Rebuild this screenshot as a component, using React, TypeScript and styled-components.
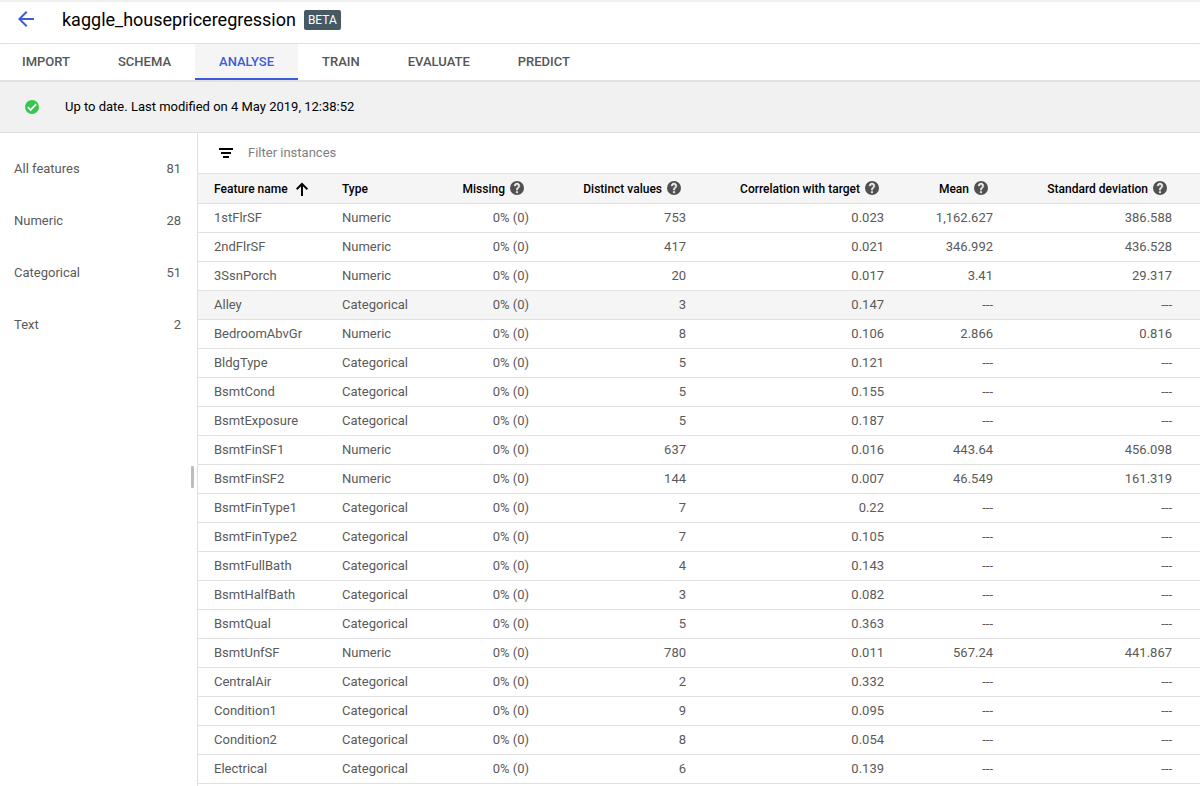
import React from 'react';
import styled, { createGlobalStyle } from 'styled-components';
import { MdArrowBack } from 'react-icons/md';

const GlobalStyle = createGlobalStyle`
  *, *::before, *::after { box-sizing: border-box; }
  body {
    margin: 0;
    background: #fff;
    color: #000;
    font-family: Roboto, "Liberation Sans", sans-serif;
    font-size: 13px;
    line-height: 20px;
  }
  button, input { font: inherit; color: inherit; }
`;

const Page = styled.div`
  display: flex;
  flex-direction: column;
  min-height: 100vh;
`;

const Header = styled.header`
  display: flex;
  align-items: center;
  height: 44px;
  padding: 0 14px 4px;
  border-bottom: 1px solid #e0e0e0;
  box-shadow: inset 0 2px 1px #f0f0f0;
`;

const BackButton = styled.button`
  display: flex;
  padding: 0 0 2px;
  border: 0;
  background: none;
  color: #3b5bdb;
  cursor: pointer;
`;

const Title = styled.h1`
  margin: 0 8px 0 24px;
  font-size: 18px;
  line-height: 24px;
  font-weight: 400;
`;

const Badge = styled.span`
  padding: 0 4px;
  border-radius: 2px;
  background: #455a64;
  color: #fff;
  font-size: 12px;
  line-height: 20px;
`;

const Tabs = styled.nav`
  display: flex;
  height: 38px;
  border-bottom: 2px solid #e0e0e0;
`;

const Tab = styled.a<{ $active?: boolean }>`
  padding: 8px 24px 0;
  border-bottom: 2px solid ${p => (p.$active ? '#3b5bdb' : 'transparent')};
  background: ${p => (p.$active ? '#f5f5f5' : 'transparent')};
  color: ${p => (p.$active ? '#3b5bdb' : '#555')};
  font-weight: 500;
  text-decoration: none;
  &:first-child { padding-left: 22px; }
`;

const StatusBar = styled.div`
  display: flex;
  align-items: center;
  gap: 26px;
  height: 51px;
  padding: 0 25px;
  border-bottom: 1px solid #e0e0e0;
  background: #f1f1f1;
`;

const Body = styled.div`
  display: flex;
  flex: 1;
`;

const Sidebar = styled.aside`
  position: relative;
  flex: 0 0 198px;
  padding-top: 10px;
  border-right: 1px solid #e0e0e0;
`;

const FeatureGroup = styled.button`
  display: flex;
  align-items: center;
  justify-content: space-between;
  width: 100%;
  height: 52px;
  padding: 0 16px 0 14px;
  border: 0;
  background: none;
  color: #5a5a5a;
  cursor: pointer;
`;

const ResizeHandle = styled.div`
  position: absolute;
  top: 333px;
  right: 3px;
  width: 3px;
  height: 22px;
  border-radius: 1px;
  background: #bdbdbd;
`;

const Main = styled.main`
  flex: 1;
  min-width: 0;
`;

const FilterBar = styled.label`
  display: flex;
  align-items: center;
  gap: 15px;
  height: 40px;
  padding: 0 21px;
`;

const FilterInput = styled.input`
  flex: 1;
  padding: 0;
  border: 0;
  outline: 0;
  background: none;
  &::placeholder { color: #808080; opacity: 1; }
`;

const Table = styled.table`
  width: 100%;
  min-width: 1000px;
  table-layout: fixed;
  border-collapse: separate;
  border-spacing: 0;
`;

const Col = styled.col<{ $width?: number }>`
  width: ${p => (p.$width ? `${p.$width}px` : 'auto')};
`;

const HeadCell = styled.th<{ $numeric?: boolean }>`
  height: 31px;
  padding: 0 ${p => (p.$numeric ? 21 : 16)}px 0 ${p => (p.$numeric ? 0 : 16)}px;
  border-top: 1px solid #e0e0e0;
  border-bottom: 1px solid #e0e0e0;
  background: #f5f5f5;
  font-size: 12px;
  font-weight: 500;
  white-space: nowrap;
`;

const HeadContent = styled.div<{ $numeric?: boolean }>`
  display: flex;
  align-items: center;
  justify-content: ${p => (p.$numeric ? 'flex-end' : 'flex-start')};
  gap: 5px;
`;

const SortButton = styled.button`
  display: flex;
  align-items: center;
  gap: 7px;
  padding: 0;
  border: 0;
  background: none;
  cursor: pointer;
`;

const Row = styled.tr<{ $hovered?: boolean }>`
  background: ${p => (p.$hovered ? '#f5f5f5' : 'transparent')};
`;

const Cell = styled.td<{ $numeric?: boolean }>`
  height: 29px;
  padding: 0 16px;
  border-bottom: 1px solid #e0e0e0;
  color: #5a5a5a;
  text-align: ${p => (p.$numeric ? 'right' : 'left')};
  white-space: nowrap;
`;

const Icon = styled.svg`
  display: block;
  flex: none;
`;

const HeadIcon = styled(Icon)`
  margin-bottom: 2px;
`;

const HelpIcon = () => (
  <HeadIcon width="14" height="14" viewBox="2 2 20 20" role="img" aria-label="Help">
    <circle cx="12" cy="12" r="10" fill="#505050" />
    <path
      d="M13 19h-2v-2h2v2zM15.07 11.25l-.9.92C13.45 12.9 13 13.5 13 15h-2v-.5c0-1.1.45-2.1 1.17-2.83l1.24-1.26c.37-.36.59-.86.59-1.41 0-1.1-.9-2-2-2s-2 .9-2 2H8c0-2.21 1.79-4 4-4s4 1.79 4 4c0 .88-.36 1.68-.93 2.25z"
      fill="#f5f5f5"
      stroke="#f5f5f5"
      strokeWidth="0.8"
    />
  </HeadIcon>
);

const CheckIcon = () => (
  <Icon width="14" height="14" viewBox="2 2 20 20" aria-hidden="true">
    <circle cx="12" cy="12" r="10" fill="#34c84a" />
    <path d="M6 12.2l4 4 8-8.4" fill="none" stroke="#fff" strokeWidth="2.4" />
  </Icon>
);

const FilterIcon = () => (
  <Icon width="14" height="10" viewBox="0 0 14 10" aria-hidden="true">
    <path d="M0 0h14v2H0zM2 4h10v2H2zM4 8h6v2H4z" />
  </Icon>
);

const SortIcon = () => (
  <Icon width="14" height="14" viewBox="0 0 14 14" aria-hidden="true">
    <path d="M7 14V2M1.7 7.2L7 1.9l5.3 5.3" fill="none" stroke="#000" strokeWidth="2" />
  </Icon>
);

const tabs = ['IMPORT', 'SCHEMA', 'ANALYSE', 'TRAIN', 'EVALUATE', 'PREDICT'];

const groups: [string, number][] = [
  ['All features', 81],
  ['Numeric', 28],
  ['Categorical', 51],
  ['Text', 2],
];

const numericColumns = ['Missing', 'Distinct values', 'Correlation with target', 'Mean', 'Standard deviation'];

// name, distinct values, correlation, then mean and deviation for numeric features
const features: [string, string, string, string?, string?][] = [
  ['1stFlrSF', '753', '0.023', '1,162.627', '386.588'],
  ['2ndFlrSF', '417', '0.021', '346.992', '436.528'],
  ['3SsnPorch', '20', '0.017', '3.41', '29.317'],
  ['Alley', '3', '0.147'],
  ['BedroomAbvGr', '8', '0.106', '2.866', '0.816'],
  ['BldgType', '5', '0.121'],
  ['BsmtCond', '5', '0.155'],
  ['BsmtExposure', '5', '0.187'],
  ['BsmtFinSF1', '637', '0.016', '443.64', '456.098'],
  ['BsmtFinSF2', '144', '0.007', '46.549', '161.319'],
  ['BsmtFinType1', '7', '0.22'],
  ['BsmtFinType2', '7', '0.105'],
  ['BsmtFullBath', '4', '0.143'],
  ['BsmtHalfBath', '3', '0.082'],
  ['BsmtQual', '5', '0.363'],
  ['BsmtUnfSF', '780', '0.011', '567.24', '441.867'],
  ['CentralAir', '2', '0.332'],
  ['Condition1', '9', '0.095'],
  ['Condition2', '8', '0.054'],
  ['Electrical', '6', '0.139'],
];

export default function App() {
  return (
    <Page>
      <GlobalStyle />
      <Header>
        <BackButton aria-label="Back"><MdArrowBack size={24} /></BackButton>
        <Title>kaggle_housepriceregression</Title>
        <Badge>BETA</Badge>
      </Header>
      <Tabs>
        {tabs.map(tab => (
          <Tab key={tab} href="#" $active={tab === 'ANALYSE'}>{tab}</Tab>
        ))}
      </Tabs>
      <StatusBar>
        <CheckIcon />
        <span>Up to date. Last modified on 4 May 2019, 12:38:52</span>
      </StatusBar>
      <Body>
        <Sidebar>
          {groups.map(([label, count]) => (
            <FeatureGroup key={label}>
              <span>{label}</span>
              <span>{count}</span>
            </FeatureGroup>
          ))}
          <ResizeHandle />
        </Sidebar>
        <Main>
          <FilterBar>
            <FilterIcon />
            <FilterInput type="text" placeholder="Filter instances" aria-label="Filter instances" />
          </FilterBar>
          <Table>
            <colgroup>
              <Col $width={128} />
              <Col $width={100} />
              <Col $width={119} />
              <Col $width={157} />
              <Col $width={198} />
              <Col $width={109} />
              <Col />
              <Col $width={12} />
            </colgroup>
            <thead>
              <tr>
                <HeadCell aria-sort="ascending">
                  <SortButton>Feature name<SortIcon /></SortButton>
                </HeadCell>
                <HeadCell><HeadContent>Type</HeadContent></HeadCell>
                {numericColumns.map(label => (
                  <HeadCell key={label} $numeric>
                    <HeadContent $numeric>{label}<HelpIcon /></HeadContent>
                  </HeadCell>
                ))}
                <HeadCell as="td" $numeric />
              </tr>
            </thead>
            <tbody>
              {features.map(([name, distinct, correlation, mean, deviation]) => (
                <Row key={name} $hovered={name === 'Alley'}>
                  <Cell>{name}</Cell>
                  <Cell>{mean ? 'Numeric' : 'Categorical'}</Cell>
                  <Cell $numeric>0% (0)</Cell>
                  <Cell $numeric>{distinct}</Cell>
                  <Cell $numeric>{correlation}</Cell>
                  <Cell $numeric>{mean ?? '---'}</Cell>
                  <Cell $numeric>{deviation ?? '---'}</Cell>
                  <Cell />
                </Row>
              ))}
            </tbody>
          </Table>
        </Main>
      </Body>
    </Page>
  );
}
